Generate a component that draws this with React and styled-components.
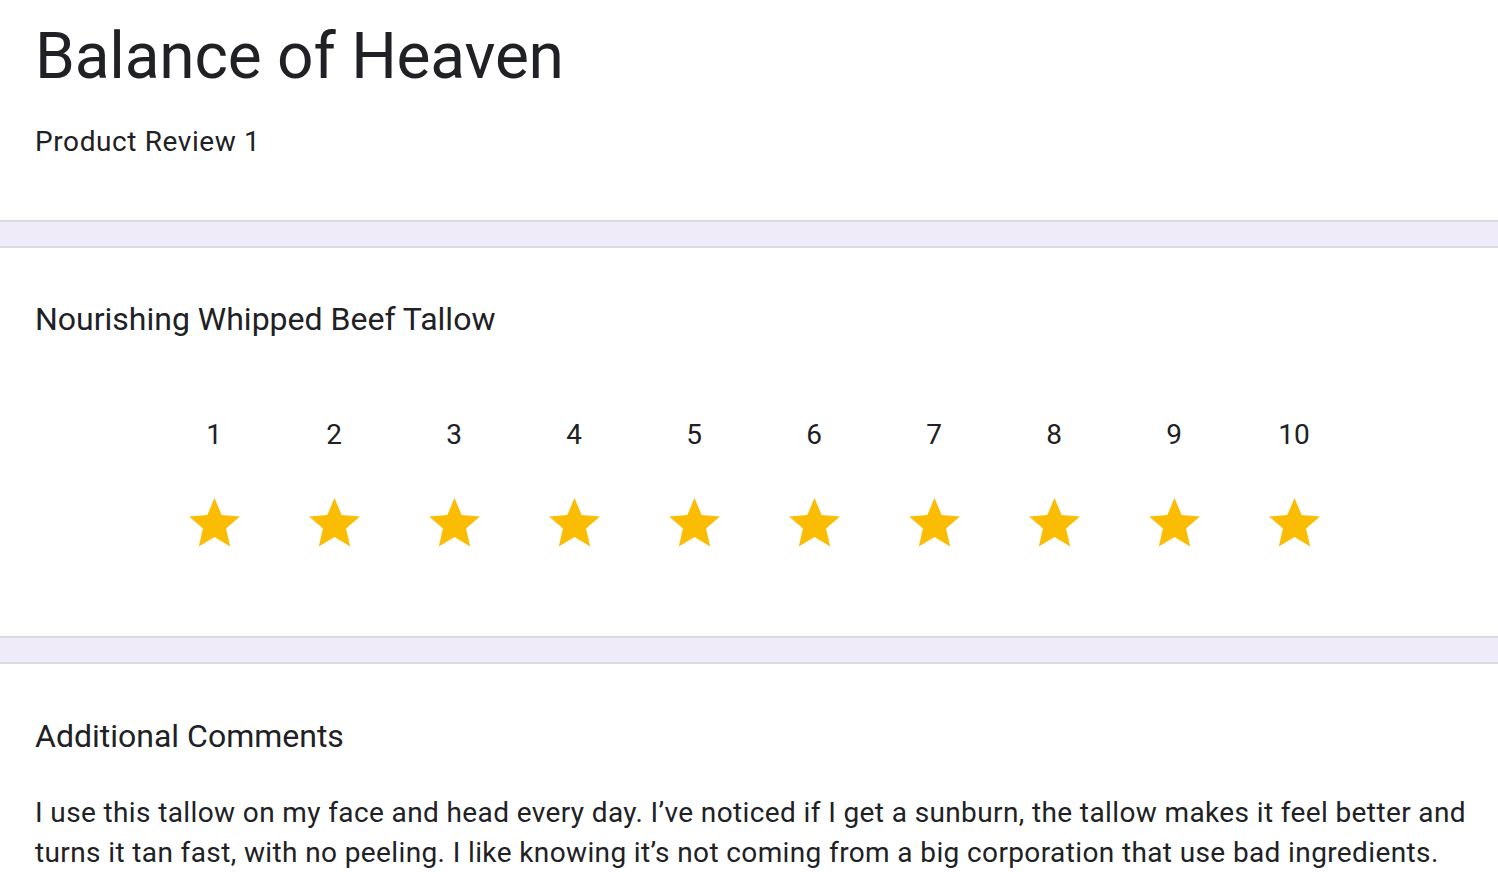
import styled, { createGlobalStyle } from 'styled-components';

const GlobalStyle = createGlobalStyle`
  body {
    margin: 0;
    background: #ffffff;
    font-family: Roboto, "Liberation Sans", Arial, sans-serif;
    color: #202124;
  }
`;

const Page = styled.main`
  display: flex;
  flex-direction: column;
  width: 100%;
`;

const Section = styled.section`
  padding: ${({ $pad }) => $pad};
  background: #ffffff;
`;

const Divider = styled.div`
  height: 24px;
  background: #f0ebf8;
  border-top: 2px solid #dadce0;
  border-bottom: 2px solid #dadce0;
`;

const Title = styled.h1`
  margin: 0;
  font-size: 64px;
  line-height: 80px;
  font-weight: 400;
  letter-spacing: -0.2px;
`;

const Description = styled.p`
  margin: 25px 0 0;
  font-size: 28px;
  line-height: 40px;
  letter-spacing: 0.6px;
`;

const Question = styled.h2`
  margin: 0;
  font-size: 32px;
  line-height: 48px;
  font-weight: 400;
`;

const Scale = styled.div`
  display: grid;
  grid-template-columns: repeat(10, 120px);
  margin: 72px 0 0 119px;
`;

const ScaleItem = styled.div`
  display: flex;
  flex-direction: column;
  align-items: center;
  gap: 38px;
`;

const ScaleLabel = styled.span`
  font-size: 28px;
  line-height: 40px;
`;

const Answer = styled.p`
  margin: 33px 0 0;
  font-size: 28px;
  line-height: 40px;
  letter-spacing: 0.38px;
`;

const Star = () => (
  <svg width="61" height="61" viewBox="0 0 24 24" aria-hidden="true">
    <path
      fill="#fbbc04"
      d="M12 17.27L18.18 21l-1.64-7.03L22 9.24l-7.19-.61L12 2 9.19 8.63 2 9.24l5.46 4.73L5.82 21z"
    />
  </svg>
);

export default function App() {
  const ratings = Array.from({ length: 10 }, (_, i) => i + 1);
  return (
    <>
      <GlobalStyle />
      <Page>
        <Section $pad="17px 20px 58px 35px">
          <Title>Balance of Heaven</Title>
          <Description>Product Review 1</Description>
        </Section>
        <Divider />
        <Section $pad="47px 20px 82px 35px">
          <Question>Nourishing Whipped Beef Tallow</Question>
          <Scale>
            {ratings.map((n) => (
              <ScaleItem key={n}>
                <ScaleLabel>{n}</ScaleLabel>
                <Star />
              </ScaleItem>
            ))}
          </Scale>
        </Section>
        <Divider />
        <Section $pad="48px 20px 40px 35px">
          <Question>Additional Comments</Question>
          <Answer>
            I use this tallow on my face and head every day. I’ve noticed if I get a sunburn, the tallow
            makes it feel better and turns it tan fast, with no peeling. I like knowing it’s not coming
            from a big corporation that use bad ingredients.
          </Answer>
        </Section>
      </Page>
    </>
  );
}
